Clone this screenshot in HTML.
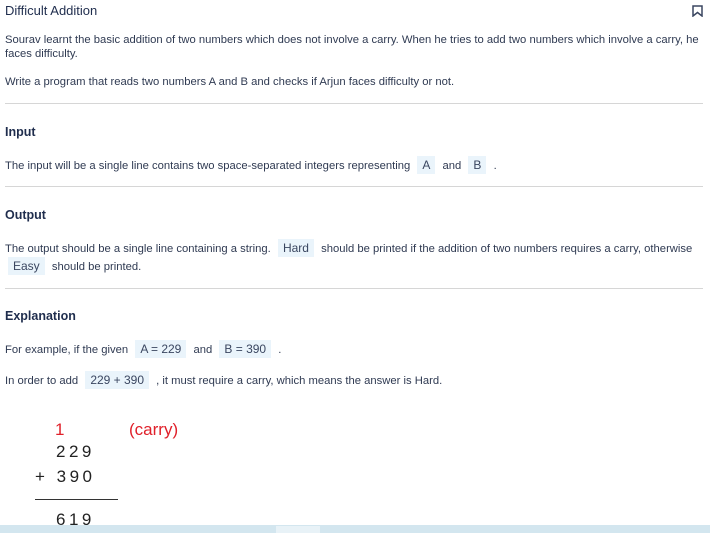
<!DOCTYPE html>
<html><head><style>
body{margin:0;width:710px;height:533px;overflow:hidden;background:#fff;font-family:"Liberation Sans",sans-serif;color:#2f3a52;position:relative}
.t{position:absolute;left:5px;font-size:11.25px;white-space:nowrap;line-height:14px}
h{position:absolute;left:5px;font-size:12.5px;font-weight:bold;color:#1f2d4d}
.c{background:#eaf4fb;padding:2px 5px;font-size:12px;margin:0 4px;color:#3a4660}
.hr{position:absolute;left:5px;width:698px;height:1px;background:#d6d6d6}
.m{position:absolute;font-size:17px;letter-spacing:3.5px;color:#222}
</style></head><body>
<div class="t" style="top:4px;font-size:13px;color:#1f2d4d">Difficult Addition</div>
<svg style="position:absolute;left:692px;top:5px" width="11" height="12" viewBox="0 0 11 12"><path d="M1 1H10V11L5.5 7.5L1 11Z" fill="none" stroke="#3a4660" stroke-width="1.5"/></svg>
<div class="t" style="top:33px">Sourav learnt the basic addition of two numbers which does not involve a carry. When he tries to add two numbers which involve a carry, he</div>
<div class="t" style="top:47px">faces difficulty.</div>
<div class="t" style="top:75px">Write a program that reads two numbers A and B and checks if Arjun faces difficulty or not.</div>
<div class="hr" style="top:103px"></div>
<h style="top:125px">Input</h>
<div class="t" style="top:158px">The input will be a single line contains two space-separated integers representing <span class="c">A</span> and <span class="c">B</span> .</div>
<div class="hr" style="top:186px"></div>
<h style="top:208px">Output</h>
<div class="t" style="top:241px">The output should be a single line containing a string. <span class="c">Hard</span> should be printed if the addition of two numbers requires a carry, otherwise</div>
<div class="t" style="top:259px;left:4px"><span class="c">Easy</span> should be printed.</div>
<div class="hr" style="top:288px"></div>
<h style="top:309px">Explanation</h>
<div class="t" style="top:342px">For example, if the given <span class="c">A = 229</span> and <span class="c">B = 390</span> .</div>
<div class="t" style="top:373px">In order to add <span class="c">229 + 390</span> , it must require a carry, which means the answer is Hard.</div>
<div class="m" style="left:55px;top:420px;color:#e0202a">1</div>
<div class="m" style="left:129px;top:420px;color:#e0202a;letter-spacing:0">(carry)</div>
<div class="m" style="left:56px;top:442px">229</div>
<div class="m" style="left:35px;top:467px">+ 390</div>
<div style="position:absolute;left:35px;top:499px;width:83px;height:1px;background:#333"></div>
<div class="m" style="left:56px;top:510px">619</div>
<div style="position:absolute;left:0;top:525px;width:710px;height:8px;background:#d3e6ef"></div>
<div style="position:absolute;left:276px;top:526px;width:44px;height:7px;background:#e8f2f7"></div>
</body></html>
